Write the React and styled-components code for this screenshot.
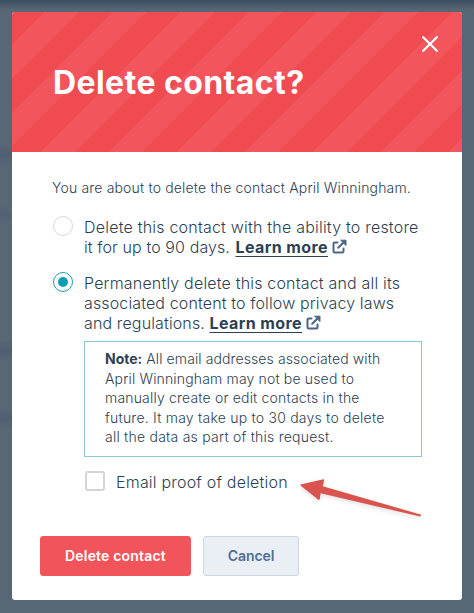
import React from 'react';
import styled, { createGlobalStyle } from 'styled-components';

const GlobalStyle = createGlobalStyle`
  *, *::before, *::after { box-sizing: border-box; }
  body {
    margin: 0;
    font-family: Inter, sans-serif;
    color: #2c3f53;
  }
`;

const Backdrop = styled.div`
  min-height: 613px;
  padding: 12px 12px 13px;
  background:
    linear-gradient(#3c4d60 0, rgba(60, 77, 96, 0) 10px) no-repeat,
    linear-gradient(transparent, rgba(72, 89, 109, 0.5), transparent) 0 144px / 12px 22px no-repeat,
    linear-gradient(transparent, rgba(72, 89, 109, 0.4), transparent) 0 205px / 10px 20px no-repeat,
    linear-gradient(transparent, rgba(72, 89, 109, 0.5), transparent) 0 340px / 12px 22px no-repeat,
    linear-gradient(transparent, rgba(72, 89, 109, 0.5), transparent) 0 407px / 12px 22px no-repeat,
    #586776;
`;

const Dialog = styled.section`
  position: relative;
  width: 450px;
  height: 588px;
  border-radius: 3px;
  overflow: hidden;
  background: #fff;
`;

const Header = styled.header`
  display: flex;
  justify-content: space-between;
  align-items: flex-start;
  height: 140px;
  padding: 24px 24px 0 41px;
  color: #fff;
  background: repeating-linear-gradient(
    135deg,
    #f04b51 0 22.8px,
    #f2555c 22.8px 47px,
    #f04b51 47px 48.08px
  );
`;

const Title = styled.h1`
  margin: 27px 0 0;
  font-size: 32px;
  line-height: 40px;
  font-weight: 700;
  letter-spacing: 0.42px;
`;

const CloseButton = styled.button`
  display: flex;
  padding: 0;
  border: 0;
  color: inherit;
  background: none;
`;

const Body = styled.div`
  padding: 26px 40px 0;
`;

const Line = styled.span`
  display: block;
  white-space: nowrap;
  letter-spacing: ${({ $track }) => $track}px;
`;

const Intro = styled.p`
  margin: 0;
  font-size: 14px;
  line-height: 20px;
  font-weight: 300;
`;

const Choice = styled.label`
  display: flex;
  gap: 11px;
  margin-top: ${({ $top }) => $top}px;
  font-size: 16px;
  line-height: 20px;
  font-weight: 300;
`;

const Radio = styled.span`
  flex: none;
  display: grid;
  place-items: center;
  width: 20px;
  height: 20px;
  margin: -1px 0 0 1px;
  border: ${({ $checked }) => ($checked ? '1.5px solid #179fb1' : '1.5px solid #d5d8e0')};
  border-radius: 50%;

  &::after {
    content: '';
    width: 10px;
    height: 10px;
    border-radius: 50%;
    background: ${({ $checked }) => ($checked ? '#0e9db3' : 'transparent')};
  }
`;

const Checkbox = styled.span`
  flex: none;
  width: 20px;
  height: 20px;
  border: 2px solid #d2d5db;
  border-radius: 3px;
`;

const LinkLine = styled.span`
  display: flex;
  white-space: nowrap;
`;

const LeadIn = styled.span`
  width: ${({ $width }) => $width}px;
  letter-spacing: ${({ $track }) => $track}px;
`;

const Link = styled.a`
  font-weight: 700;
  letter-spacing: 0.4px;
  text-decoration: underline;
  text-decoration-thickness: 1px;
  text-underline-offset: 3px;
  text-decoration-skip-ink: none;
`;

const LinkIcon = styled.svg`
  flex: none;
  width: 15px;
  height: 15px;
  margin: 2px 0 0 4px;
`;

const Note = styled.div`
  width: 338px;
  height: 116px;
  margin: 8px 0 0 32px;
  padding: 7px 20px 0;
  border: 1px solid #8bc8cf;
  font-size: 14px;
  line-height: 19.5px;
  font-weight: 300;
`;

const Strong = styled.strong`
  font-weight: 700;
  letter-spacing: 0;
`;

const ProofRow = styled.label`
  display: flex;
  gap: 11px;
  margin: 14px 0 0 33px;
  font-size: 16px;
  font-weight: 300;
  line-height: 22px;
`;

const Footer = styled.footer`
  display: flex;
  gap: 12px;
  padding: 43px 28px 0;
`;

const Button = styled.button`
  width: ${({ $primary }) => ($primary ? 151 : 96)}px;
  height: 40px;
  padding: 0;
  border: 1px solid ${({ $primary }) => ($primary ? '#f2545b' : '#cbd6e2')};
  border-radius: 3px;
  font: 600 14px/20px Inter, sans-serif;
  letter-spacing: ${({ $primary }) => ($primary ? 0.18 : -0.1)}px;
  color: ${({ $primary }) => ($primary ? '#fff' : '#506e91')};
  background: ${({ $primary }) => ($primary ? '#f2545b' : '#eaeff6')};
`;

const Pointer = styled.svg`
  position: absolute;
  left: 286px;
  top: 462px;
  filter: drop-shadow(0 2px 2px rgba(0, 0, 0, 0.12));
`;

function LearnMore() {
  return (
    <>
      <Link>Learn more</Link>
      <LinkIcon viewBox="0 0 15 15" fill="none" stroke="#4b6685" strokeWidth="2" strokeLinecap="round" strokeLinejoin="round">
        <path d="M5.500 3.500H2.800A1.300 1.300 0 0 0 1.500 4.800V12.200A1.300 1.300 0 0 0 2.800 13.500H10.200A1.300 1.300 0 0 0 11.500 12.200V9.500" />
        <path d="M6.200 8.800 12.200 2.800" />
        <path d="M9 1.200h5v5z" fill="#4b6685" strokeWidth="1" />
      </LinkIcon>
    </>
  );
}

const noteLines = [
  ['April Winningham may not be used to', 0.16],
  ['manually create or edit contacts in the', 0.18],
  ['future. It may take up to 30 days to delete', 0.22],
  ['all the data as part of this request.', 0.23],
];

export default function App() {
  return (
    <Backdrop>
      <GlobalStyle />
      <Dialog>
        <Header>
          <Title>Delete contact?</Title>
          <CloseButton aria-label="Close">
            <svg width="16" height="16" viewBox="0 0 16 16" stroke="currentColor" strokeWidth="2.3" strokeLinecap="round">
              <path d="M1.200 1.200 14.800 14.800M14.800 1.200 1.200 14.800" />
            </svg>
          </CloseButton>
        </Header>
        <Body>
          <Intro>
            <Line $track={0.17}>You are about to delete the contact April Winningham.</Line>
          </Intro>
          <Choice $top={19}>
            <Radio />
            <div>
              <Line $track={0.21}>Delete this contact with the ability to restore</Line>
              <LinkLine>
                <LeadIn $width={151.5} $track={0.1}>it for up to 90 days.</LeadIn>
                <LearnMore />
              </LinkLine>
            </div>
          </Choice>
          <Choice $top={16}>
            <Radio $checked />
            <div>
              <Line $track={0.18}>Permanently delete this contact and all its</Line>
              <Line $track={0.13}>associated content to follow privacy laws</Line>
              <LinkLine>
                <LeadIn $width={125.5} $track={0.13}>and regulations.</LeadIn>
                <LearnMore />
              </LinkLine>
            </div>
          </Choice>
          <Note>
            <Line $track={0.1}><Strong>Note:</Strong> All email addresses associated with</Line>
            {noteLines.map(([text, track]) => (
              <Line key={text} $track={track}>{text}</Line>
            ))}
          </Note>
          <ProofRow>
            <Checkbox />
            <Line $track={0.2}>Email proof of deletion</Line>
          </ProofRow>
        </Body>
        <Footer>
          <Button $primary>Delete contact</Button>
          <Button>Cancel</Button>
        </Footer>
        <Pointer width="128" height="48" viewBox="298 474 128 48" fill="#d9534f">
          <path d="M300.500 484.500 323.500 479.300Q324.600 479.300 324 481L322.800 486.300 420.500 514.600Q422 515.800 420 516.500L320.600 493.300 319.800 499Q319.200 500.500 318 499.500L300.500 485.500Q299.800 484.800 300.500 484.500Z" />
        </Pointer>
      </Dialog>
    </Backdrop>
  );
}
